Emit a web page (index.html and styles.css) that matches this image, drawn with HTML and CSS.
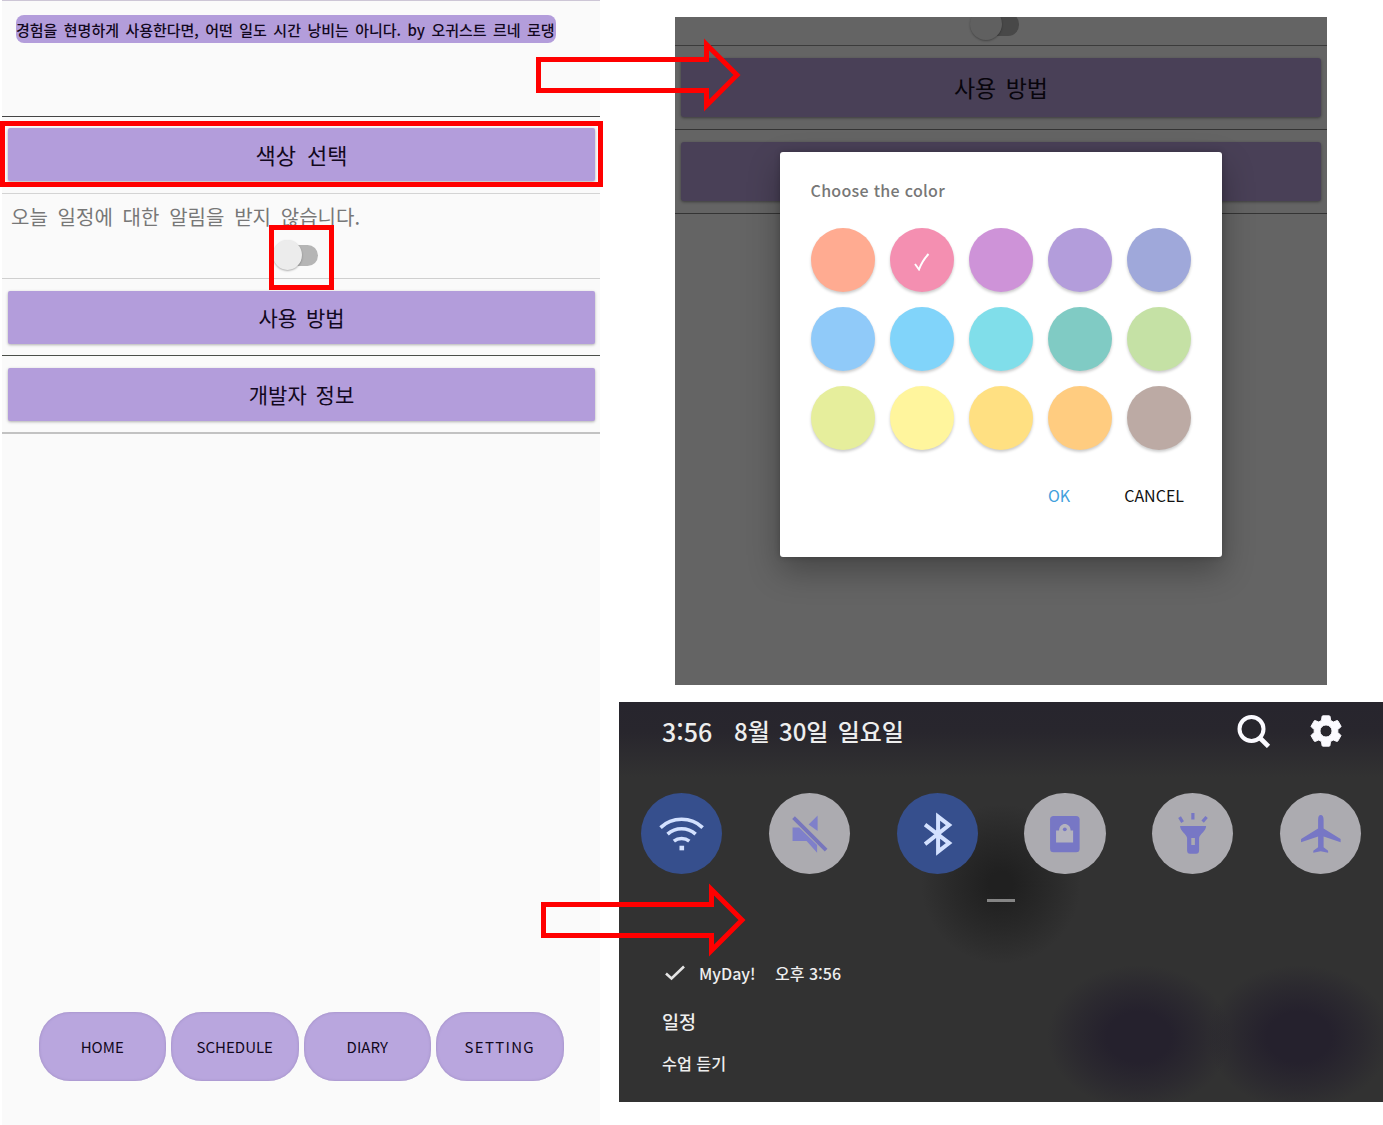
FILE: index.html
```html
<!DOCTYPE html>
<html lang="ko">
<head>
<meta charset="utf-8">
<title>MyDay 설정</title>
<link rel="stylesheet" href="styles.css">
</head>
<body>
<main class="board">
  <section class="phone">
    <div class="quote-area"><p class="quote">경험을 현명하게 사용한다면, 어떤 일도 시간 낭비는 아니다. by 오귀스트 르네 로댕</p></div>
    <div class="row row-color"><button class="bar">색상 선택</button></div>
    <div class="alarm">
      <p class="alarm-text">오늘 일정에 대한 알림을 받지 않습니다.</p>
      <span class="switch"><i class="thumb"></i></span>
    </div>
    <div class="row row-usage"><button class="bar">사용 방법</button></div>
    <div class="row row-dev"><button class="bar">개발자 정보</button></div>
    <nav class="tabs">
      <button class="tab">HOME</button>
      <button class="tab">SCHEDULE</button>
      <button class="tab">DIARY</button>
      <button class="tab tab-wide">SETTING</button>
    </nav>
  </section>

  <div class="side">
    <section class="picker">
      <div class="dim-top"><span class="switch dim-switch"><i class="thumb"></i></span></div>
      <div class="dim-row"><div class="dim-bar">사용 방법</div></div>
      <div class="dim-row"><div class="dim-bar"></div></div>
      <div class="dialog">
        <h2 class="dialog-title">Choose the color</h2>
        <div class="swatches">
          <i class="sw c1"></i>
          <i class="sw c2"><svg width="16" height="18" viewBox="0 0 16 18"><path d="M1 11 5 16.500Q8 8 14.500 1" fill="none" stroke="#fff" stroke-width="1.900"/></svg></i>
          <i class="sw c3"></i><i class="sw c4"></i><i class="sw c5"></i>
          <i class="sw c6"></i><i class="sw c7"></i><i class="sw c8"></i><i class="sw c9"></i><i class="sw c10"></i>
          <i class="sw c11"></i><i class="sw c12"></i><i class="sw c13"></i><i class="sw c14"></i><i class="sw c15"></i>
        </div>
        <div class="actions"><span class="ok">OK</span><span class="cancel">CANCEL</span></div>
      </div>
    </section>

    <section class="shade">
      <header class="status">
        <span class="time">3:56</span><span class="date">8월 30일 일요일</span>
        <svg class="search" width="34" height="34" viewBox="0 0 34 34" fill="none" stroke="#fbfaff"><circle cx="14.500" cy="15" r="12" stroke-width="4"/><path d="M23 24 31.500 32.500" stroke-width="4.600"/></svg>
        <svg class="gear" width="38" height="38" viewBox="0 0 24 24" fill="#fbfaff" stroke="#fbfaff" stroke-width=".6" stroke-linejoin="round"><path d="M19.430 12.980c.04-.32.07-.64.07-.98s-.03-.66-.07-.98l1.900-1.500c.19-.15.24-.42.12-.64l-1.900-3.260c-.12-.22-.39-.3-.61-.22l-2.290.9c-.52-.4-1.080-.73-1.690-.98l-.38-2.450C14.460 2.580 14.250 2.400 14 2.400h-4c-.25 0-.46.18-.49.42l-.38 2.500c-.61.25-1.170.59-1.690.98l-2.290-.9c-.23-.09-.49 0-.61.22l-1.900 3.260c-.13.22-.07.49.12.64l1.810 1.500c-.04.32-.07.65-.07.98s.03.66.07.98l-1.810 1.500c-.19.15-.24.42-.12.64l1.900 3.260c.12.22.39.3.61.22l2.290-.9c.52.4 1.080.73 1.690.98l.38 2.500c.03.24.24.42.49.42h4c.25 0 .46-.18.49-.42l.38-2.500c.61-.25 1.170-.59 1.690-.98l2.290.9c.23.09.49 0 .61-.22l1.900-3.260c.12-.22.07-.49-.12-.64l-1.810-1.500zM12 15.800a3.800 3.800 0 1 1 0-7.600 3.800 3.800 0 0 1 0 7.600z"/></svg>
      </header>
      <div class="toggles">
        <span class="toggle on"><svg viewBox="0 0 81 81" fill="none" stroke="#d3e1ff" stroke-width="3.600"><path d="M19.500 34.500C31 23.500 50 23.500 61.500 34.500M26.500 41C34.500 33.800 46.500 33.800 54.500 41M32.800 48C37.200 44.500 43.800 44.500 48.200 48"/><rect x="38.400" y="52.600" width="4.600" height="4.600" fill="#d3e1ff" stroke="none"/></svg></span>
        <span class="toggle"><svg viewBox="0 0 81 81"><path fill="#7f80ca" d="M23.500 34.500H30L48 52V59.500L37.500 48H23.500ZM39.500 31.500 48.500 22.500V38Z"/><path d="M24.500 24.500 57 57" stroke="#7776bd" stroke-width="3.800"/></svg></span>
        <span class="toggle on"><svg viewBox="0 0 81 81" fill="none" stroke="#d3e1ff" stroke-width="4"><path d="M28 31.500 52 50 41 58.500V23.500L52 32 28 51"/></svg></span>
        <span class="toggle"><svg viewBox="0 0 81 81"><rect x="26" y="23" width="29.500" height="36" rx="3.500" fill="#7777c5"/><path fill="#b4b3be" d="M32 37.500H35C35 28.800 46.500 28.800 46.500 37.500H49V49.500H32Z"/><circle cx="40.700" cy="36.200" r="1.900" fill="#7777c5"/></svg></span>
        <span class="toggle"><svg viewBox="0 0 81 81"><path fill="#7777c5" fill-rule="evenodd" d="M28 33H54C54 38 47.500 41 47 45V57Q47 60.500 44 60.500H38Q35 60.500 35 57V45C34.500 41 28 38 28 33ZM39.200 45V52H42.800V45Z"/><path d="M40.800 20V26.500M27.500 24 30.500 29M54.500 24 50.500 28.500" stroke="#7777c5" stroke-width="3.200"/></svg></span>
        <span class="toggle"><svg viewBox="0 0 81 81"><path fill="#7777c5" d="M40.600 22Q43.500 22 43.500 27V35.500L60.500 46V49.200L43.500 43.500V54L48 57.500V59.500L40.600 58 33.200 59.500V57.500L38 54V43.500L21 49.200V46L38 35.500V27Q38 22 40.600 22Z"/></svg></span>
      </div>
      <i class="handle"></i>
      <article class="note">
        <div class="note-head">
          <svg width="20" height="16" viewBox="0 0 20 16"><path d="M1 8.500 6.500 13.500 19 1.500" fill="none" stroke="#e4e4e4" stroke-width="2.600"/></svg>
          <span class="app">MyDay!</span><span class="when">오후 3:56</span>
        </div>
        <p class="note-title">일정</p>
        <p class="note-body">수업 듣기</p>
      </article>
    </section>
  </div>

  <i class="mark mark-color"></i>
  <i class="mark mark-switch"></i>
  <svg class="arrow arrow-top" width="206" height="76" viewBox="0 0 206 76"><path d="M2.500 22.500H170.500V7.500L201 38 170.500 68.500V53.500H2.500Z"/></svg>
  <svg class="arrow arrow-bottom" width="206" height="76" viewBox="0 0 206 76"><path d="M2.500 22.500H170.500V7.500L201 38 170.500 68.500V53.500H2.500Z"/></svg>
</main>
</body>
</html>
```
FILE: styles.css
```css
* { box-sizing: border-box; }
body { margin: 0; background: #fff; font-family: "Noto Sans CJK KR", "Noto Sans", sans-serif; color: #120820; }
p, h2 { margin: 0; font-weight: 400; }
i { display: block; font-style: normal; }
button { border: 0; padding: 0; font: inherit; color: inherit; }
.board { position: relative; display: flex; width: 1383px; height: 1125px; overflow: hidden; }

.phone { width: 598px; height: 1125px; margin-left: 2px; background: #fafafa; border-top: 1px solid #cdc6d6; display: flex; flex-direction: column; }
.quote-area { height: 116px; padding: 14px 0 0 14px; border-bottom: 1px solid #444; }
.quote { width: 540px; height: 28px; border-radius: 8px; background: #b39ddb; font-size: 15px; line-height: 29px; word-spacing: 2.300px; font-weight: 500; letter-spacing: -.02px; white-space: nowrap; }
.row { padding: 0 5px 0 6px; }
.bar { display: block; width: 100%; height: 53px; border-radius: 2px; background: #b39ddb; box-shadow: 0 1px 3px rgba(0,0,0,.3); font-size: 21px; line-height: 53px; word-spacing: 3px; }
.row-color { height: 77px; padding-top: 11px; border-bottom: 1px solid #d4d4d4; }
.row-color .bar { font-size: 22px; word-spacing: 5px; }
.alarm { height: 85px; border-bottom: 1px solid #cfcfcf; display: flex; flex-direction: column; }
.alarm-text { height: 46px; padding-left: 9px; font-size: 20px; line-height: 46px; word-spacing: 4.200px; color: #777; }
.row-usage { height: 77px; padding-top: 12px; border-bottom: 1px solid #4b4f49; }
.row-dev { height: 78px; padding-top: 12px; border-bottom: 2px solid #c2c2c2; }
.switch { display: block; width: 41px; height: 21px; margin: 5px 0 0 275px; border-radius: 11px; background: #b5b5b5; }
.thumb { position: relative; left: -4px; top: -5px; width: 29px; height: 30px; border-radius: 50%; background: #ececec; box-shadow: 0 1px 2px rgba(0,0,0,.3); }
.tabs { display: flex; gap: 5px; margin: 578px 0 0 36.500px; }
.tab { width: 127.500px; height: 69px; border-radius: 31px; background: #b9a6de; box-shadow: inset 0 0 3px #9d8bc0; font-size: 15px; line-height: 69px; }
.tab-wide { letter-spacing: 1.300px; }

.side { width: 764px; margin-left: 19px; padding-top: 17px; }
.picker { position: relative; width: 652px; height: 668px; margin-left: 56px; background: #646464; overflow: hidden; }
.dim-top { height: 29px; border-bottom: 1px solid #3b3b3b; }
.dim-switch { margin: -8px 0 0 299px; width: 45px; height: 23px; background: #484848; display: inline-block; }
.dim-switch .thumb { width: 32px; height: 32px; background: #606060; }
.dim-row { height: 84px; padding: 12px 6px 0; border-bottom: 1px solid #343434; }
.dim-bar { height: 59px; border-radius: 3px; background: #494057; box-shadow: 0 1px 3px rgba(0,0,0,.4); color: #08050c; font-size: 23px; line-height: 59px; word-spacing: 3px; text-align: center; }
.dialog { position: absolute; left: 104.500px; top: 135px; width: 442.500px; height: 405px; padding: 25px 31px; border-radius: 3px; background: #fff; box-shadow: 0 14px 32px rgba(0,0,0,.3), 0 0 6px rgba(0,0,0,.2); }
.dialog-title { height: 51px; font-size: 16px; line-height: 27px; letter-spacing: .3px; color: #777; font-weight: 500; }
.swatches { display: grid; grid-template-columns: repeat(5, 64px); gap: 15px; }
.sw { width: 64px; height: 64px; border-radius: 50%; box-shadow: 0 2px 3px rgba(0,0,0,.2); display: flex; align-items: center; justify-content: center; }
.sw svg { margin-top: 3px; }
.c1 { background: #ffab91; } .c2 { background: #f48fb1; } .c3 { background: #ce93d8; } .c4 { background: #b39ddb; } .c5 { background: #9fa8da; }
.c6 { background: #90caf9; } .c7 { background: #81d4fa; } .c8 { background: #80deea; } .c9 { background: #80cbc4; } .c10 { background: #c5e1a5; }
.c11 { background: #e6ee9c; } .c12 { background: #fff59d; } .c13 { background: #ffe082; } .c14 { background: #ffcc80; } .c15 { background: #bcaaa4; }
.actions { display: flex; justify-content: flex-end; gap: 54px; margin: 33px 7px 0 0; font-size: 16px; line-height: 24px; color: #111; }
.ok { color: #42a0dc; }

.shade { height: 400px; margin-top: 17px; padding-top: 8px; color: #eee; background:
  radial-gradient(ellipse 92px 72px at 520px 335px, #25212d 35%, rgba(37,33,45,.5) 70%, rgba(37,33,45,0) 100%),
  radial-gradient(ellipse 92px 72px at 680px 335px, #25212d 35%, rgba(37,33,45,.5) 70%, rgba(37,33,45,0) 100%),
  radial-gradient(circle 80px at 382px 182px, #202020 15%, rgba(32,32,32,.5) 60%, rgba(32,32,32,0) 100%),
  linear-gradient(#27252d 0, #28262d 30px, #323232 75px); }
.status { display: flex; align-items: center; height: 42px; padding-left: 43px; font-size: 25px; font-weight: 500; line-height: 38px; }
.time { width: 72px; }
.date { width: 503px; font-size: 24px; word-spacing: 2.500px; white-space: nowrap; }
.gear { margin-left: 36px; }
.toggles { display: flex; gap: 46.600px; margin: 41px 0 0 22px; }
.toggle { width: 81.200px; height: 81.200px; flex: none; border-radius: 50%; background: #acabb0; }
.toggle.on { background: #364f8d; }
.toggle svg { display: block; width: 100%; height: 100%; }
.handle { width: 28px; height: 3px; margin: 25px 0 0 368px; background: #858585; }
.note { padding: 57px 0 0 43px; font-weight: 500; }
.note-head { display: flex; align-items: center; height: 28px; padding-left: 3px; font-size: 16px; }
.app { width: 76px; margin-left: 14px; }
.note-title { margin-top: 20px; font-size: 18.500px; line-height: 28px; font-weight: 500; }
.note-body { margin-top: 14px; font-size: 16.200px; line-height: 28px; font-weight: 500; }

.mark { position: absolute; border: 5px solid #f00; }
.mark-color { left: 0; top: 121px; width: 603px; height: 66px; }
.mark-switch { left: 269px; top: 225px; width: 65px; height: 65px; }
.arrow { position: absolute; fill: none; stroke: #f00; stroke-width: 5; }
.arrow-top { left: 536px; top: 36.500px; }
.arrow-bottom { left: 541px; top: 881.500px; }
```
